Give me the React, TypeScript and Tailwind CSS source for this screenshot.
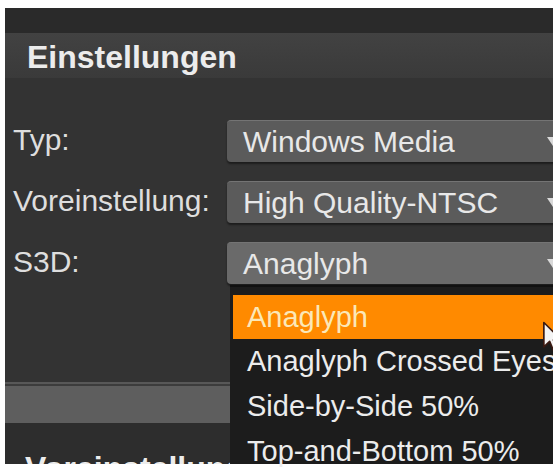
const FIELDS = [
  { label: "Typ:", value: "Windows Media", open: false },
  { label: "Voreinstellung:", value: "High Quality-NTSC", open: false },
  { label: "S3D:", value: "Anaglyph", open: true },
];

const S3D_OPTIONS = [
  "Anaglyph",
  "Anaglyph Crossed Eyes",
  "Side-by-Side 50%",
  "Top-and-Bottom 50%",
];

function Caret() {
  return (
    <svg width="12" height="9" viewBox="0 0 12 9" className="shrink-0">
      <path d="M0 0 H12 L6 9 Z" fill="#d9d9d9" />
    </svg>
  );
}

function Pointer() {
  return (
    <svg
      width="22"
      height="32"
      viewBox="0 0 14 21"
      className="absolute left-[537px] top-[313px]"
    >
      <path
        d="M1 1 L1 17 L4.8 13.4 L7.4 19.6 L9.8 18.6 L7.3 12.5 L12.6 12.5 Z"
        fill="#f4f4f4"
        stroke="#3a1a12"
        strokeWidth="1.1"
        strokeLinejoin="round"
      />
    </svg>
  );
}

export default function App() {
  return (
    <div className="w-[553px] h-[468px] overflow-hidden bg-white pl-[5px] pt-[8px] font-[family-name:Liberation_Sans,Arial,sans-serif]">
      <div className="relative w-[600px] h-[456px] flex flex-col bg-[#333333]">
        {/* window title strip */}
        <div className="h-[25px] bg-[#2a2a2a]" />

        <div className="h-[45px] pl-[22px] pt-[9px] bg-gradient-to-b from-[#424242] to-[#3a3a3a]">
          <h2 className="text-[32px] leading-[30px] font-bold text-[#ececec]">
            Einstellungen
          </h2>
        </div>

        <div className="flex-1 pt-[42px]">
          <div className="grid grid-cols-[222px_340px] gap-y-[19px]">
            {FIELDS.map((f) => (
              <div key={f.label} className="contents">
                <span className="pl-[8px] text-[30px] leading-[40px] text-[#dedede]">
                  {f.label}
                </span>
                <div
                  className={`h-[42px] flex items-center justify-between pl-[16px] pr-[8px] rounded-[4px] border-t border-[#747474] shadow-[0_2px_2px_rgba(0,0,0,0.45)] ${
                    f.open ? "bg-[#6a6a6a]" : "bg-[#5b5b5b]"
                  }`}
                >
                  <span className="text-[30px] leading-[40px] text-[#e8e8e8]">
                    {f.value}
                  </span>
                  <Caret />
                </div>
              </div>
            ))}
          </div>
        </div>

        {/* collapsed section below */}
        <div className="h-[2px] bg-[#585858]" />
        <div className="h-[2px] bg-[#3c3c3c]" />
        <div className="h-[37px] bg-[#5e5e5e]" />
        <div className="h-[41px] overflow-hidden pl-[20px] pt-[30px] bg-[#2d2d2d]">
          <h2 className="text-[32px] leading-[30px] font-bold text-[#ececec]">
            Voreinstellungen
          </h2>
        </div>

        {/* open S3D list */}
        <ul className="absolute left-[225px] top-[277px] bottom-0 w-[340px] pl-[3px] pt-[8px] bg-[#1c1c1c] border-t-2 border-[#111111]">
          {S3D_OPTIONS.map((opt, i) => (
            <li
              key={opt}
              className={`pl-[14px] text-[29px] whitespace-nowrap ${
                i === 0
                  ? "h-[44px] leading-[44px] bg-[#ff8a00] text-[#fbe8b8]"
                  : "h-[45px] leading-[45px] text-[#ececec]"
              }`}
            >
              {opt}
            </li>
          ))}
        </ul>

        <Pointer />
      </div>
    </div>
  );
}
